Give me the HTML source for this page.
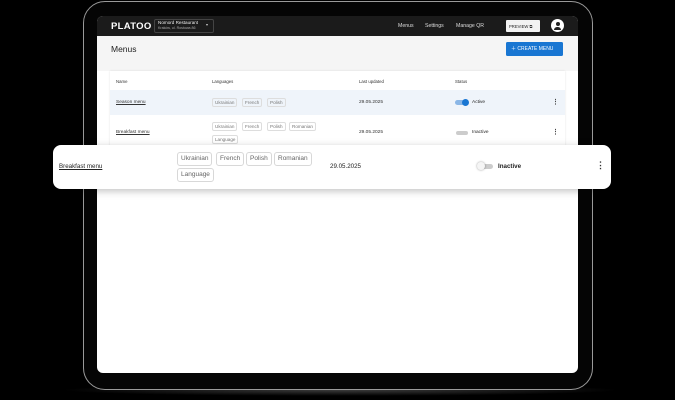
<!DOCTYPE html>
<html><head><meta charset="utf-8"><style>
*{box-sizing:border-box;margin:0;padding:0}
body{width:675px;height:400px;background:#000;position:relative;overflow:hidden;font-family:"Liberation Sans",sans-serif}
.abs{position:absolute}
.dev{left:83px;top:1px;width:510px;height:389px;border-radius:22px;border:1.5px solid #9a9a9a;background:#050505}
.glow{left:60px;top:384px;width:560px;height:12px;background:radial-gradient(ellipse at center,rgba(120,120,120,.5),rgba(0,0,0,0) 70%)}
.scr{left:97px;top:16px;width:481px;height:357px;border-radius:6px;background:#fff;overflow:hidden}
.hdr{left:0;top:0;width:481px;height:20px;background:#1b1b1b}
.t{position:absolute;white-space:nowrap}
.chip{position:absolute;border:1px solid #ddd;border-radius:2px;color:#777;font-size:4.6px;height:9px;line-height:8px;padding:0 2px}
.chip2{position:absolute;border:1px solid #d8d8d8;border-radius:3px;color:#666;font-size:6.5px;height:14px;line-height:12px;padding:0 3px}
</style></head><body>
<div class="abs glow"></div>
<div class="abs dev"></div>
<div class="abs scr">
 <div class="abs hdr">
  <div class="t" style="left:14px;top:5px;color:#fff;font-weight:bold;font-size:9.5px;letter-spacing:.3px">PLATOO</div>
  <div class="abs" style="left:57px;top:3px;width:60px;height:14px;border:1px solid #444;border-radius:2px"></div>
  <div class="t" style="left:61px;top:4px;color:#eee;font-size:4.6px">Nomord Restaurant</div>
  <div class="t" style="left:61px;top:10px;color:#aaa;font-size:3.6px">Kraków, ul. Rostowa 86</div>
  <div class="t" style="left:109px;top:6px;color:#ccc;font-size:4px">▾</div>
  <div class="t" style="left:301px;top:7px;color:#ddd;font-size:5.2px">Menus</div>
  <div class="t" style="left:328px;top:7px;color:#ddd;font-size:5.2px">Settings</div>
  <div class="t" style="left:359px;top:7px;color:#ddd;font-size:5.2px">Manage QR</div>
  <div class="abs" style="left:409px;top:4px;width:34px;height:12px;background:#f2f2f2;border-radius:1px"></div>
  <div class="t" style="left:412px;top:7.5px;color:#222;font-size:4.2px">PREVIEW ⧉</div>
  <div class="abs" style="left:454px;top:3px;width:13px;height:13px;border-radius:50%;background:#fff"></div>
  <div class="abs" style="left:458.5px;top:6px;width:4px;height:4px;border-radius:50%;background:#222"></div>
  <div class="abs" style="left:457px;top:10.5px;width:7px;height:3px;border-radius:3px 3px 0 0;background:#222"></div>
 </div>
 <div class="abs" style="left:0;top:20px;width:481px;height:35px;background:#f5f5f5"></div>
 <div class="t" style="left:14px;top:28px;color:#222;font-size:8.5px">Menus</div>
 <div class="abs" style="left:409px;top:26px;width:57px;height:14px;background:#1976d2;border-radius:1.5px"></div>
 <div class="t" style="left:414px;top:29px;color:#fff;font-size:5px">＋ CREATE MENU</div>
 <div class="abs" style="left:13px;top:55px;width:455px;height:90px;background:#fff;box-shadow:0 0 2px rgba(0,0,0,.12)"></div>
 <div class="t" style="left:19px;top:63px;color:#333;font-size:4.3px">Name</div>
 <div class="t" style="left:115px;top:63px;color:#333;font-size:4.3px">Languages</div>
 <div class="t" style="left:262px;top:63px;color:#333;font-size:4.3px">Last updated</div>
 <div class="t" style="left:358px;top:63px;color:#333;font-size:4.3px">Status</div>
 <div class="abs" style="left:13px;top:74px;width:455px;height:25px;background:#eff4fa"></div>
 <div class="t" style="left:19px;top:84px;color:#333;font-size:4.8px;text-decoration:underline">Season menu</div>
 <div class="chip" style="left:115px;top:82px">Ukrainian</div>
 <div class="chip" style="left:145px;top:82px">French</div>
 <div class="chip" style="left:170px;top:82px">Polish</div>
 <div class="t" style="left:262px;top:84px;color:#333;font-size:4.8px">29.05.2025</div>
 <div class="abs" style="left:358px;top:84px;width:13px;height:5px;border-radius:3px;background:#8ab6e6"></div>
 <div class="abs" style="left:365px;top:83px;width:7px;height:7px;border-radius:50%;background:#1976d2"></div>
 <div class="t" style="left:375px;top:84px;color:#222;font-size:4.8px">Active</div>
 <div class="t" style="left:455px;top:82px;color:#444;font-size:7px;font-weight:bold">⋮</div>
 <div class="t" style="left:19px;top:114px;color:#333;font-size:4.8px;text-decoration:underline">Breakfast menu</div>
 <div class="chip" style="left:115px;top:106px">Ukrainian</div>
 <div class="chip" style="left:145px;top:106px">French</div>
 <div class="chip" style="left:170px;top:106px">Polish</div>
 <div class="chip" style="left:192px;top:106px">Romanian</div>
 <div class="chip" style="left:115px;top:119px">Language</div>
 <div class="t" style="left:262px;top:114px;color:#333;font-size:4.8px">29.05.2025</div>
 <div class="t" style="left:375px;top:114px;color:#222;font-size:4.8px">Inactive</div>
 <div class="abs" style="left:359px;top:115px;width:12px;height:4px;border-radius:3px;background:#ccc"></div>
 <div class="t" style="left:455px;top:112px;color:#444;font-size:7px;font-weight:bold">⋮</div>
</div>
<div class="abs" style="left:53px;top:145px;width:558px;height:44px;background:#fff;border-radius:8px;box-shadow:0 2px 8px rgba(0,0,0,.25)">
 <div class="t" style="left:6px;top:18px;color:#222;font-size:6.2px;text-decoration:underline">Breakfast menu</div>
 <div class="chip2" style="left:124px;top:7px">Ukrainian</div>
 <div class="chip2" style="left:163px;top:7px">French</div>
 <div class="chip2" style="left:193px;top:7px">Polish</div>
 <div class="chip2" style="left:221px;top:7px">Romanian</div>
 <div class="chip2" style="left:124px;top:23px">Language</div>
 <div class="t" style="left:277px;top:18px;color:#222;font-size:6.2px">29.05.2025</div>
 <div class="abs" style="left:425px;top:19px;width:15px;height:5px;border-radius:3px;background:#ccc"></div>
 <div class="abs" style="left:424px;top:17px;width:8px;height:8px;border-radius:50%;background:#f5f5f5;box-shadow:0 0 2px rgba(0,0,0,.4)"></div>
 <div class="t" style="left:445px;top:18px;color:#222;font-size:6.2px;font-weight:bold">Inactive</div>
 <div class="t" style="left:543px;top:15px;color:#333;font-size:9px;font-weight:bold">⋮</div>
</div>
</body></html>
